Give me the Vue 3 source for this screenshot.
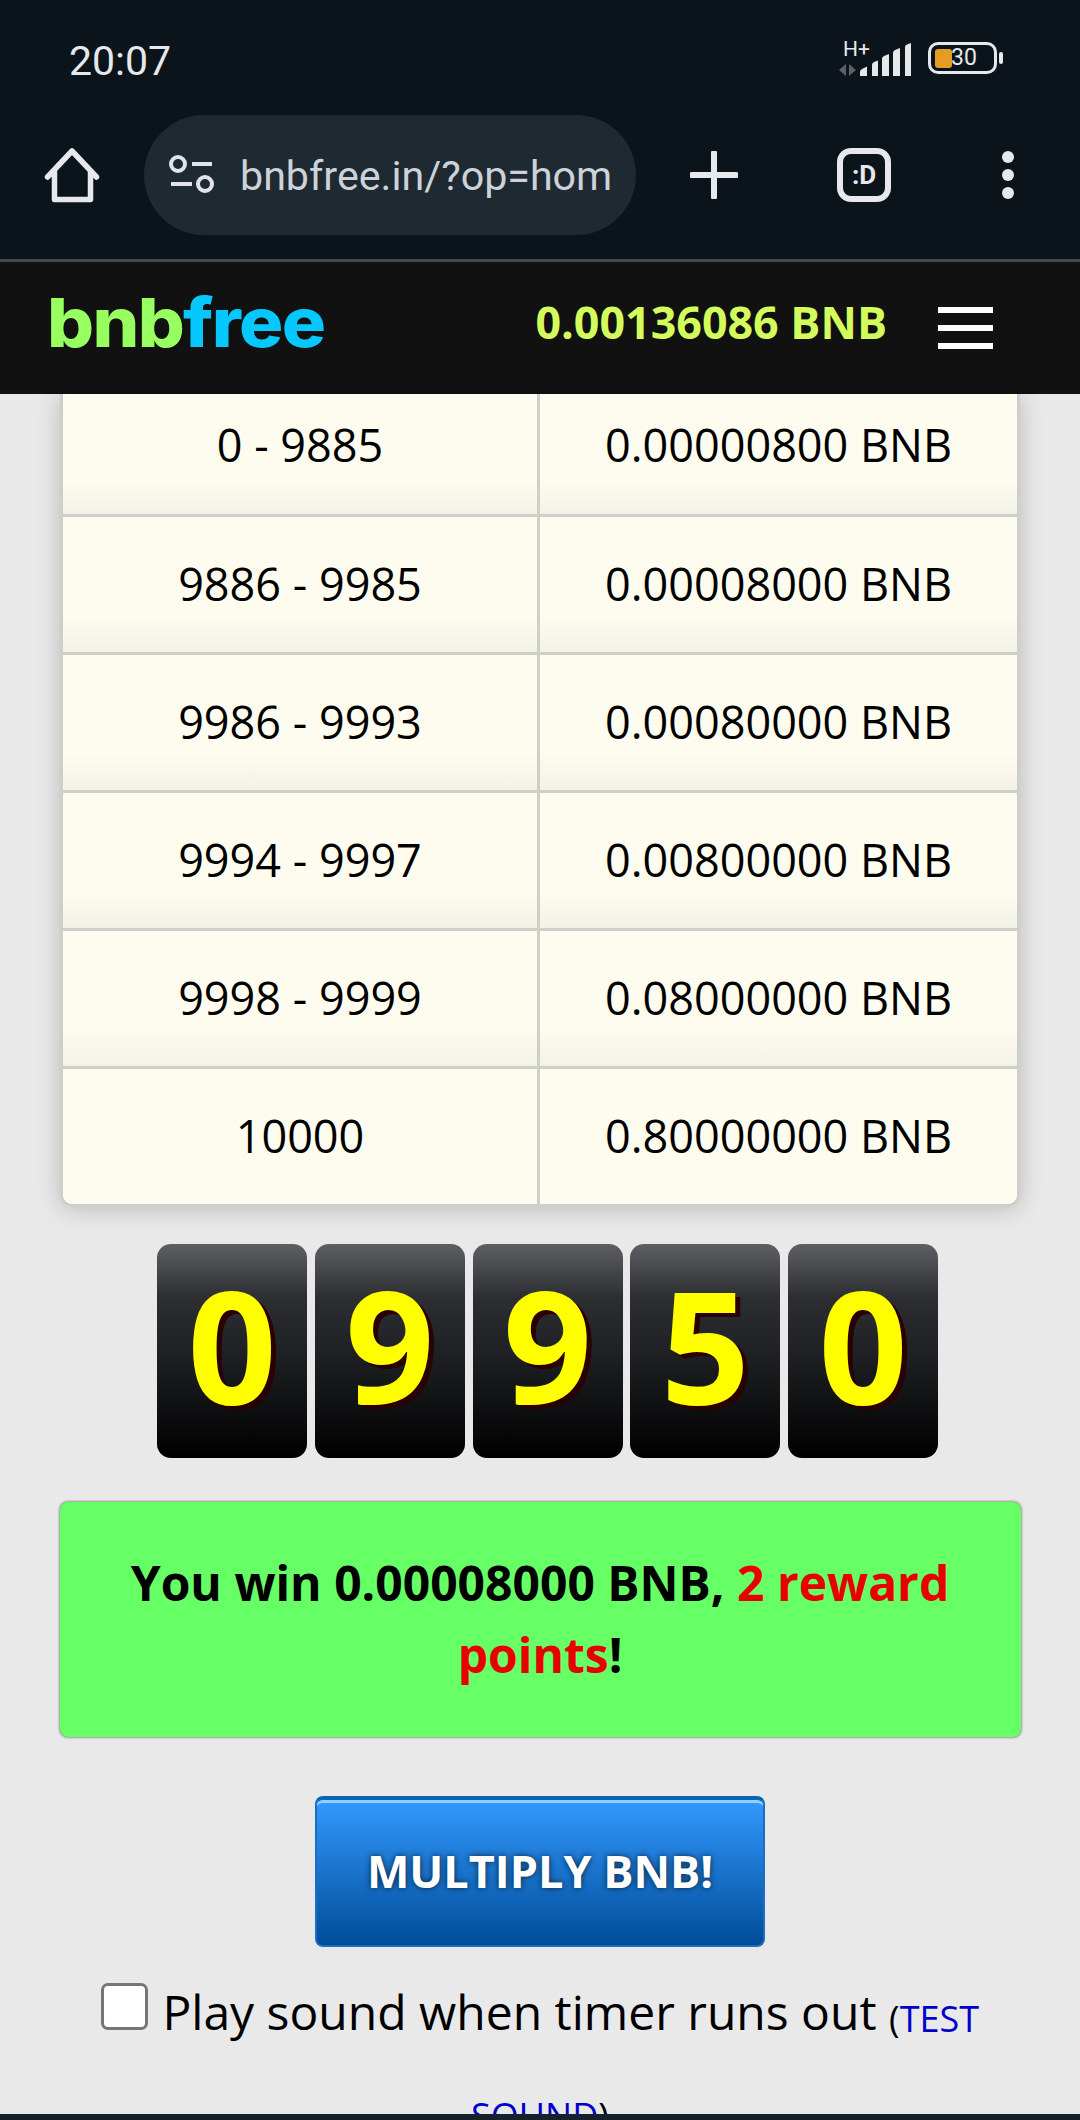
<script setup>
const rows = [
  ['0 - 9885', '0.00000800 BNB'],
  ['9886 - 9985', '0.00008000 BNB'],
  ['9986 - 9993', '0.00080000 BNB'],
  ['9994 - 9997', '0.00800000 BNB'],
  ['9998 - 9999', '0.08000000 BNB'],
  ['10000', '0.80000000 BNB'],
]
const digits = ['0', '9', '9', '5', '0']
</script>

<template>
  <div class="screen">
    <div class="chrome">
      <div class="status">
        <span class="time">20:07</span>
        <div class="status-right">
          <svg class="signal" width="73" height="38" viewBox="0 0 73 38">
            <text x="4" y="17" class="hplus">H+</text>
            <path d="M7 25v12l-7-6zM10 25l7 6-7 6z" fill="#5b6166"/>
            <path d="M21 37v-4q0-2 2-3l5-2.500V37zM33 37V26q0-2 2-3l4-1.500V37zM43 37V20q0-2 2-3l5-2v22zM54 37V14q0-2 2-3l5-2v28zM66 37V8q0-2 2-2.500L72 4v33z" fill="#e6e8ea"/>
          </svg>
          <div class="battery">
            <div class="battery-body">
              <span class="battery-fill"></span>
              <span class="battery-num">30</span>
            </div>
            <span class="battery-tip"></span>
          </div>
        </div>
      </div>
      <div class="toolbar">
        <svg class="home" width="56" height="56" viewBox="0 0 56 56">
          <path d="M3.500 30L28 4l24.500 26M10.500 25v27.500h36V25" fill="none" stroke="#e6e8ec" stroke-width="5.500" stroke-linecap="round" stroke-linejoin="round"/>
        </svg>
        <div class="url">
          <svg width="46" height="40" viewBox="0 0 46 40">
            <circle cx="9" cy="9" r="7" fill="none" stroke="#e0e3e8" stroke-width="4"/>
            <path d="M23 9h20M2 29h21" stroke="#e0e3e8" stroke-width="4"/>
            <circle cx="36" cy="29" r="7" fill="none" stroke="#e0e3e8" stroke-width="4"/>
          </svg>
          <span class="url-text">bnbfree.in/?op=hom</span>
        </div>
        <svg class="plus" width="48" height="48" viewBox="0 0 48 48">
          <path d="M24 2v44M2 24h44" stroke="#e6e8ec" stroke-width="6" stroke-linecap="round"/>
        </svg>
        <div class="tabs">:D</div>
        <div class="menu-dots"><i></i><i></i><i></i></div>
      </div>
    </div>

    <header class="site-head">
      <div class="logo"><span class="logo-a">bnb</span><span class="logo-b">free</span></div>
      <div class="balance">0.00136086 BNB</div>
      <div class="burger"><i></i><i></i><i></i></div>
    </header>

    <main class="page">
      <div class="table">
        <div v-for="(r, i) in rows" :key="i" class="row">
          <div class="cell">{{ r[0] }}</div>
          <div class="cell">{{ r[1] }}</div>
        </div>
      </div>

      <div class="digits">
        <div v-for="(d, i) in digits" :key="i" class="digit">{{ d }}</div>
      </div>

      <div class="win">
        You win 0.00008000 BNB, <span class="red">2 reward points</span>!
      </div>

      <button class="multiply">MULTIPLY BNB!</button>

      <div class="sound">
        <span class="box"></span> Play sound when timer runs out <small>(<a>TEST SOUND</a>)</small>
      </div>
    </main>

    <div class="bottom-bar"></div>
  </div>
</template>

<style>
html, body { margin: 0; padding: 0; }
</style>

<style scoped>
.screen {
  width: 1080px;
  height: 2120px;
  position: relative;
  overflow: hidden;
  display: flex;
  flex-direction: column;
  background: #e9e9ea;
  font-family: "Open Sans", sans-serif;
}
.chrome {
  background: #0c141b;
  height: 259px;
  flex: none;
  border-bottom: 3px solid #44494e;
}
.status {
  height: 115px;
  display: flex;
  align-items: center;
  justify-content: space-between;
  padding: 6px 77px 0 69px;
  box-sizing: border-box;
}
.time {
  font-family: Roboto, sans-serif;
  font-size: 41px;
  color: #e6e8ec;
}
.status-right { display: flex; align-items: center; gap: 16px; margin-top: -6px; }
.signal { display: block; }
.hplus { font: 21px Roboto, sans-serif; fill: #e6e8ec; }
.battery { display: flex; align-items: center; gap: 2px; }
.battery-body {
  width: 69px;
  height: 32px;
  box-sizing: border-box;
  border: 3px solid #e6e8ec;
  border-radius: 10px;
  position: relative;
  display: flex;
  align-items: center;
  padding-left: 20px;
}
.battery-fill {
  position: absolute;
  left: 4px;
  top: 4px;
  width: 17px;
  height: 19px;
  background: #e49c22;
  border-radius: 3px;
}
.battery-num {
  position: relative;
  font: 23px/1 Roboto, sans-serif;
  color: #e6e8ec;
}
.battery-tip { width: 4px; height: 12px; background: #e6e8ec; border-radius: 2px; }
.toolbar {
  display: flex;
  align-items: center;
  height: 120px;
  padding-left: 44px;
}
.home { flex: none; }
.url {
  margin-left: 44px;
  width: 492px;
  height: 120px;
  background: #1e2932;
  border-radius: 60px;
  flex: none;
  display: flex;
  align-items: center;
  gap: 25px;
  padding-left: 25px;
  box-sizing: border-box;
  overflow: hidden;
}
.url svg { flex: none; }
.url-text {
  font-family: Roboto, sans-serif;
  font-size: 41.200px;
  color: #cdd2d8;
  white-space: nowrap;
  padding-top: 2px;
}
.plus { margin-left: 54px; flex: none; }
.tabs {
  margin-left: 99px;
  width: 54px;
  height: 54px;
  box-sizing: border-box;
  border: 6px solid #e6e8ec;
  border-radius: 14px;
  color: #e6e8ec;
  font: 700 26px/42px Roboto, sans-serif;
  text-align: center;
  flex: none;
}
.menu-dots {
  margin-left: 111px;
  display: flex;
  flex-direction: column;
  gap: 6px;
}
.menu-dots i { width: 12px; height: 12px; background: #e6e8ec; border-radius: 50%; display: block; }

.site-head {
  height: 132px;
  flex: none;
  background: #111;
  display: flex;
  align-items: center;
  padding: 0 87px 0 47px;
}
.logo {
  font-family: Inter, sans-serif;
  font-weight: 800;
  font-size: 68px;
  letter-spacing: -1.500px;
  line-height: 1;
  margin-top: -12px;
  transform: scaleX(1.085);
  transform-origin: left center;
}
.logo-a { color: #97ff5f; }
.logo-b { color: #06c8ff; }
.balance {
  margin-left: auto;
  color: #d4fb5c;
  font-size: 44.800px;
  font-weight: 700;
  margin-top: -14px;
}
.burger {
  margin-left: 51px;
  width: 55px;
  display: flex;
  flex-direction: column;
  gap: 12px;
}
.burger i { display: block; height: 6px; background: #fff; }

.page {
  flex: 1;
  min-height: 0;
  display: flex;
  flex-direction: column;
  align-items: center;
}
.table {
  width: 960px;
  flex: none;
  border-radius: 0 0 12px 12px;
  box-shadow: 0 2px 24px rgba(0, 0, 0, 0.2);
  border: 3px solid #cfcfca;
  border-top: 0;
  overflow: hidden;
  box-sizing: border-box;
}
.row {
  display: grid;
  grid-template-columns: 477px 477px;
  height: 138px;
  border-bottom: 3px solid #cfcfca;
  box-sizing: border-box;
}
.row:first-child { height: 123px; }
.row:last-child { border-bottom: 0; height: 135px; }
.cell {
  display: flex;
  align-items: center;
  justify-content: center;
  font-size: 45px;
  color: #000;
  padding-bottom: 2px;
  background: linear-gradient(#fefcee 72%, #f3f2e8);
}
.row:first-child .cell { padding-bottom: 19px; }
.row:last-child .cell { background: #fefcee; }
.cell:first-child { border-right: 3px solid #cfcfca; }
.digits {
  display: flex;
  gap: 7.750px;
  margin: 37px 0 0 15px;
  flex: none;
}
.digit {
  width: 150px;
  height: 214px;
  border-radius: 14px;
  background: linear-gradient(#5d5f63, #2c2e32 25%, #1f2124 50%, #000);
  color: #ff0;
  font-size: 156px;
  font-weight: 700;
  line-height: 200px;
  text-align: center;
  text-shadow: 5px 4px 0 #2a0000;
}
.win {
  margin-top: 44px;
  width: 961px;
  height: 235px;
  flex: none;
  box-sizing: border-box;
  background: #66ff66;
  border-radius: 8px;
  box-shadow: 0 0 3px rgba(0, 0, 0, 0.7);
  padding: 45px 40px 0;
  text-align: center;
  font-size: 48px;
  line-height: 72px;
  font-weight: 700;
  color: #000;
}
.red { color: #e80000; }
.multiply {
  margin-top: 59px;
  width: 450px;
  height: 151px;
  flex: none;
  border-radius: 8px;
  border: 2px solid #1a6fc4;
  border-top: 4px solid #0e62b3;
  box-shadow: inset 0 3px 0 #8fd0ff;
  background: linear-gradient(#3399ff, #004c99);
  color: #fff;
  font-family: "Open Sans", sans-serif;
  font-weight: 700;
  font-size: 45px;
  padding: 0 0 4px;
  text-shadow: 0 0 6px rgba(0, 0, 0, 0.7);
}
.sound {
  margin-top: 20px;
  width: 960px;
  flex: none;
  text-align: center;
  font-size: 48px;
  line-height: 90px;
  color: #000;
}
.box {
  display: inline-block;
  width: 47px;
  height: 47px;
  box-sizing: border-box;
  background: #fff;
  border: 3px solid #767676;
  border-radius: 7px;
  margin-right: 2px;
  vertical-align: 0;
}
.sound small { font-size: 36px; vertical-align: -2px; }
.sound a { color: #0000cc; }
.bottom-bar {
  position: absolute;
  left: 0;
  right: 0;
  bottom: 0;
  height: 6px;
  background: #17212b;
}
</style>
